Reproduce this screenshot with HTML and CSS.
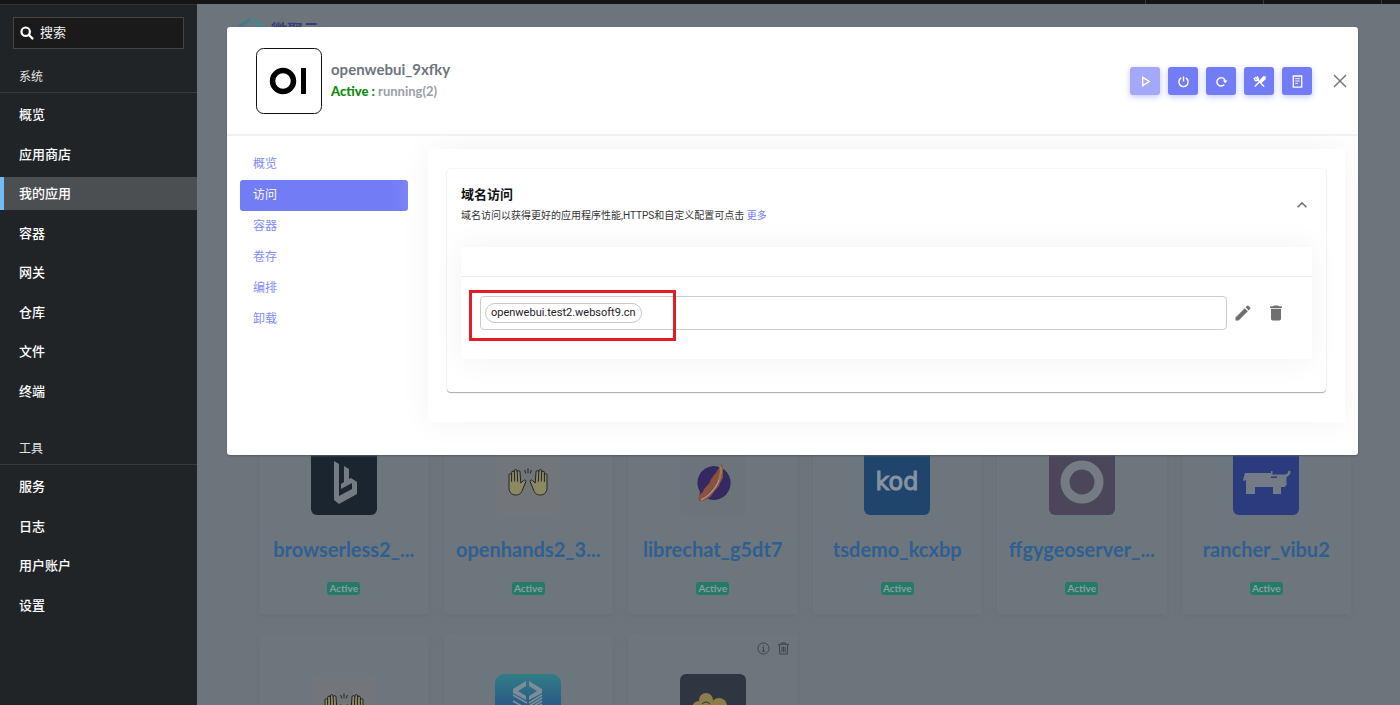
FILE: index.html
```html
<!DOCTYPE html>
<html lang="zh-CN">
<head>
<meta charset="utf-8">
<meta name="viewport" content="width=device-width, initial-scale=1">
<title>我的应用</title>
<link rel="stylesheet" href="styles.css">
</head>
<body>
<svg class="defs" aria-hidden="true">
  <symbol id="hands" viewBox="0 0 40 28">
    <g id="hand" fill="#8c8961" stroke="#20242c" stroke-width="1" stroke-linejoin="round" stroke-linecap="round">
      <path d="M1 15V7a1.3 1.3 0 0 1 2.6 0V4.500a1.400 1.400 0 0 1 2.800 0V3a1.400 1.400 0 0 1 2.800 0V4a1.400 1.400 0 0 1 2.800 0l.8 11 3-2.700c1.200-.9 2.600.1 2 1.500l-3.500 8.500C13 26 10.500 27 7.500 27 3.500 27 1 24 1 20z"/>
      <path d="M3.600 7v6.500M6.400 4.500l.3 8.500M9.200 4l.5 9.500" fill="none"/>
    </g>
    <use href="#hand" transform="matrix(-1 0 0 1 40 0)"/>
    <path d="M16.500 2l1.500 3.500M20 .5v4.500M23.500 2L22 5.500" stroke="#20242c" fill="none"/>
  </symbol>
</svg>
<div class="page">
  <div class="topbar"><span></span><span></span><span></span></div>
  <div class="shell">
    <aside class="sidebar">
      <label class="search">
        <svg viewBox="0 0 16 16" width="14" height="14" aria-hidden="true"><circle cx="6.500" cy="6.500" r="4.800"/><path d="M10.200 10.200L15 15"/></svg>
        <input type="text" placeholder="搜索" aria-label="搜索">
      </label>
      <h2 class="side-title">系统</h2>
      <nav class="side-list side-list-system">
        <a href="#">概览</a><a href="#">应用商店</a><a href="#" class="current">我的应用</a><a href="#">容器</a><a href="#">网关</a><a href="#">仓库</a><a href="#">文件</a><a href="#">终端</a>
      </nav>
      <h2 class="side-title side-title-tools">工具</h2>
      <nav class="side-list side-list-tools">
        <a href="#">服务</a><a href="#">日志</a><a href="#">用户账户</a><a href="#">设置</a>
      </nav>
    </aside>
    <main class="main">
      <header class="brand">
        <svg viewBox="0 0 28 28" width="28" height="28" aria-hidden="true"><path d="M1 11L13 2.500V6L5 12v6l-4 2z" fill="#397f87"/><path d="M15 2.500L27 11v9l-4-2v-6l-8-6z" fill="#3b8b8d"/><path d="M2 22l12 6 12-6-4-2-8 4-8-4z" fill="#35608b"/></svg>
        <span>微聚云</span>
      </header>
      <section class="apps">
        <article class="app">
          <svg class="app-logo" viewBox="0 0 66 66"><rect width="66" height="66" rx="6" fill="#1b2530"/><path d="M23 12l5 3v32l13-7v-6l-11 6v-5l3-2V17l5 3v10l2-1 6 4v12L28 55l-5-4z" fill="#747c83"/></svg>
          <h3>browserless2_...</h3><span class="badge">Active</span>
        </article>
        <article class="app">
          <svg class="app-logo" viewBox="0 0 66 66"><rect width="66" height="66" rx="6" fill="#727579"/><use href="#hands" x="13" y="19" width="40" height="28"/></svg>
          <h3>openhands2_3...</h3><span class="badge">Active</span>
        </article>
        <article class="app">
          <svg class="app-logo" viewBox="0 0 66 66"><rect width="66" height="66" rx="6" fill="#6c747b"/><path d="M33 17a17 17 0 1 1-9 31l-5 3 1-8A17 17 0 0 1 33 17z" fill="#342961"/><path d="M41 14c3 5 2 9 2 14-1 4-3 5-4 9-3 4-5 5-7 9-4 4-8 7-13 6-2-3 1-7 4-9 1-5 5-6 7-10 2-6 5-7 7-11 2-3 4-4 4-8z" fill="#8b513f"/><path d="M41 18c1 14-8 27-20 33" fill="none" stroke="#aaa49c" stroke-width="1.200"/><path d="M40 17c2 5 1 9-1 14" stroke="#967d4f" stroke-width="2" fill="none"/></svg>
          <h3>librechat_g5dt7</h3><span class="badge">Active</span>
        </article>
        <article class="app">
          <svg class="app-logo" viewBox="0 0 66 66"><rect width="66" height="66" rx="6" fill="#20456d"/><text x="33" y="41" class="kod">kod</text></svg>
          <h3>tsdemo_kcxbp</h3><span class="badge">Active</span>
        </article>
        <article class="app">
          <svg class="app-logo" viewBox="0 0 66 66"><rect width="66" height="66" rx="6" fill="#4b465a"/><circle cx="33" cy="33" r="17" fill="none" stroke="#747b84" stroke-width="9"/></svg>
          <h3>ffgygeoserver_...</h3><span class="badge">Active</span>
        </article>
        <article class="app">
          <svg class="app-logo" viewBox="0 0 66 66"><rect width="66" height="66" rx="6" fill="#2a3c7e"/><path d="M12 24h26v5h7v9h3v7h-8v-7H22v7h-9V31l-2 1-1-1zM38 22h1.500v3.500H51c3 0 4-1 4.500-4l2 .5c0 3-1 5-4 6v8l-2 2h-6l-1.500-2V27.500h-6z" fill="#737b87"/></svg>
          <h3>rancher_vibu2</h3><span class="badge">Active</span>
        </article>
        <article class="app">
          <svg class="app-logo" viewBox="0 0 66 66"><rect width="66" height="66" rx="6" fill="#727579"/><use href="#hands" x="13" y="19" width="40" height="28"/></svg>
        </article>
        <article class="app">
          <svg class="app-logo" viewBox="0 0 66 66"><defs><linearGradient id="blue" x2="0" y2="1"><stop stop-color="#317d87"/><stop offset=".5" stop-color="#2a5885"/><stop offset="1" stop-color="#28437c"/></linearGradient></defs><rect width="66" height="66" rx="9" fill="url(#blue)"/><path d="M31 7L18 15v4l13 7v-4l-8-5 8-5zM34 7l13 8v4l-13 7v-4l8-5-8-5z" fill="#7d8d98"/><path d="M18 21l14 8M18 27l14 8M34 29l13-8M34 32l13-8M34 35l13-8M34 38l13-8" stroke="#7d8d98" stroke-width="1.600"/></svg>
        </article>
        <article class="app app-hover">
          <div class="app-tools">
            <button type="button" aria-label="详情"><svg viewBox="0 0 14 14" width="13" height="13"><circle cx="7" cy="7" r="6"/><path d="M5.500 6H7v4M5.500 10h3M7 3.500v1"/></svg></button>
            <button type="button" aria-label="删除"><svg viewBox="0 0 14 14" width="13" height="13"><path d="M1 2.500h12M5 2.500V1h4v1.500M2.500 3l.5 10h8l.5-10M5.300 5v6M7 5v6M8.700 5v6"/></svg></button>
          </div>
          <svg class="app-logo" viewBox="0 0 66 66"><rect width="66" height="66" rx="6" fill="#2f3642"/><g fill="#8c7d4a"><circle cx="26" cy="26" r="7"/><circle cx="39" cy="32" r="8"/><circle cx="19" cy="34" r="7"/></g><path d="M22 30q4-4 8 0" fill="none" stroke="#2f3642"/></svg>
        </article>
      </section>
    </main>
    <div class="overlay">
      <section class="dialog" role="dialog" aria-label="openwebui_9xfky">
        <header class="dialog-head">
          <svg class="dialog-logo" viewBox="0 0 66 66" role="img" aria-label="OI"><rect x=".5" y=".5" width="65" height="65" rx="7" fill="#fff" stroke="#111"/><circle cx="27" cy="33" r="10.500" fill="none" stroke="#000" stroke-width="5.500"/><rect x="45" y="20" width="5" height="26"/></svg>
          <div class="dialog-name"><h1>openwebui_9xfky</h1><p><strong>Active :</strong> running(2)</p></div>
          <div class="actions">
            <button type="button" disabled aria-label="启动"><svg viewBox="0 0 14 14"><path d="M4 2.500v9L11 7z"/></svg></button>
            <button type="button" aria-label="停止"><svg viewBox="0 0 14 14"><path d="M4.500 3.200a5 5 0 1 0 5 0M7 1.500V7"/></svg></button>
            <button type="button" aria-label="重启"><svg viewBox="0 0 14 14"><path d="M10 10.300A4.500 4.500 0 1 1 11 6.500"/><path d="M8.500 6h5L11 9z" fill="#fff" stroke="none"/></svg></button>
            <button type="button" aria-label="重建"><svg viewBox="0 0 14 14"><path d="M4 4l8 8.500M2 12.500l5.500-5.700"/><path d="M7.500 6.500l4-4.500 1.500.2V4L9 7.800z" fill="#fff"/><path d="M1 3l1.500 3L5 6l1-1.500L4.500 1.500M2.500 2L4 4" /></svg></button>
            <button type="button" aria-label="日志"><svg viewBox="0 0 14 14"><path d="M2.500 1h9v12h-9z"/><path d="M4.500 4h5M4.500 6.500h5M4.500 9h3" stroke-width="1"/></svg></button>
          </div>
          <button type="button" class="close" aria-label="关闭"><svg viewBox="0 0 16 16" width="16" height="16"><path d="M2 2l12 12M14 2L2 14"/></svg></button>
        </header>
        <div class="dialog-body">
          <nav class="tabs"><a href="#">概览</a><a href="#" class="selected">访问</a><a href="#">容器</a><a href="#">卷存</a><a href="#">编排</a><a href="#">卸载</a></nav>
          <div class="panel">
            <section class="accordion">
              <header class="accordion-head">
                <div><h2>域名访问</h2><p>域名访问以获得更好的应用程序性能,HTTPS和自定义配置可点击 <a href="#">更多</a></p></div>
                <button type="button" class="plain" aria-label="收起"><svg viewBox="0 0 24 24" width="20" height="20"><path d="M12 8l-6 6 1.410 1.410L12 10.830l4.590 4.580L18 14z"/></svg></button>
              </header>
              <div class="domains">
                <div class="domain-row">
                  <div class="field"><span class="chip">openwebui.test2.websoft9.cn</span><input type="text" aria-label="域名"><span class="highlight"></span></div>
                  <button type="button" class="plain" aria-label="编辑"><svg viewBox="0 0 24 24" width="20" height="20"><path d="M3 17.250V21h3.750L17.810 9.940l-3.750-3.750L3 17.250zM20.710 7.040a1 1 0 0 0 0-1.410l-2.340-2.340a1 1 0 0 0-1.410 0l-1.830 1.830 3.750 3.750z"/></svg></button>
                  <button type="button" class="plain" aria-label="删除"><svg viewBox="0 0 24 24" width="20" height="20"><path d="M6 19c0 1.100.9 2 2 2h8c1.100 0 2-.9 2-2V7H6zM19 4h-3.500l-1-1h-5l-1 1H5v2h14z"/></svg></button>
                </div>
              </div>
            </section>
          </div>
        </div>
      </section>
    </div>
  </div>
</div>
</body>
</html>
```
FILE: styles.css
```css
* { box-sizing: border-box; }
body {
  margin: 0;
  font-family: Roboto, "Noto Sans CJK SC", sans-serif;
  background: #6d757c;
}
h1, h2, h3, p { margin: 0; }
a { text-decoration: none; }
button { border: 0; padding: 0; background: none; font: inherit; }
input { border: 0; outline: 0; background: none; font: inherit; min-width: 0; }
svg { display: block; flex: none; }
.defs { position: absolute; width: 0; height: 0; }

.page { height: 100vh; overflow: hidden; display: flex; flex-direction: column; }
.topbar {
  height: 4px;
  flex: none;
  display: flex;
  justify-content: flex-end;
  gap: 117px;
  padding-right: 18px;
  background: #151515;
}
.topbar span { width: 1px; background: #3a3a3a; }
.shell { flex: 1; min-height: 0; display: flex; position: relative; }

/* Sidebar */
.sidebar { width: 197px; flex: none; background: #212427; border-top: 1px solid #303336; color: #fff; }
.search {
  display: flex;
  align-items: center;
  gap: 6px;
  height: 32px;
  margin: 12px 13px 0;
  padding: 0 6px;
  background: #1a1a1a;
  border: 1px solid #444;
}
.search svg { fill: none; stroke: #fff; stroke-width: 2.5; }
.search input { flex: 1; width: 100%; padding: 0 0 2px; color: #fff; font-size: 13px; }
.search input::placeholder { color: #f0f0f0; opacity: 1; }
.side-title {
  height: 44px;
  padding: 17px 19px 0;
  border-bottom: 1px solid #383b3e;
  color: #e4e4e4;
  font-size: 12px;
  font-weight: 400;
  line-height: 22px;
}
.side-title-tools { margin-top: 10px; }
.side-list { display: grid; grid-auto-rows: 1fr; align-items: center; padding-top: 2px; font-size: 13px; font-weight: 500; }
.side-list-system { min-height: 318px; }
.side-list-tools { min-height: 160px; }
.side-list a { padding: 0 19px; color: #fff; line-height: 33px; }
.side-list .current { background: #4b4f52; border-left: 4px solid #73bcf7; padding-left: 15px; }

/* Application list behind the dialog */
.main { flex: 1; min-width: 0; overflow: hidden; padding: 12px 49px 0 62px; background: #6d757c; }
.brand {
  display: flex;
  align-items: center;
  gap: 6px;
  height: 26px;
  margin-left: -22px;
  color: #363f79;
  font-size: 16px;
  font-weight: 700;
}
.apps { display: grid; grid-template-columns: repeat(6, 1fr); gap: 20px 15px; margin-top: 367px; }
.app {
  position: relative;
  height: 205px;
  padding-top: 40px;
  display: flex;
  flex-direction: column;
  align-items: center;
  background: #6e767d;
  border-radius: 3px;
  box-shadow: 0 2px 6px #676f79;
  font-family: Lato, "Open Sans", sans-serif;
}
.app-logo { width: 66px; height: 66px; }
.app h3 { margin-top: 21px; color: #2f5f90; font-size: 20px; line-height: 26px; font-weight: 700; white-space: nowrap; }
.badge {
  margin-top: 20px;
  padding: 0 2px;
  border-radius: 3px;
  background: #257b68;
  color: #8b9ea0;
  font-size: 10px;
  line-height: 13px;
  font-weight: 700;
}
.kod { fill: #8793a0; stroke: #8793a0; stroke-width: 1; font: 24px "DejaVu Sans", sans-serif; text-anchor: middle; }
.app-tools { position: absolute; top: 8px; right: 8px; display: flex; gap: 7px; }
.app-tools svg { fill: none; stroke: #394149; stroke-width: 1; }

/* Dialog */
.overlay { position: absolute; top: 0; right: 0; bottom: 0; left: 197px; padding: 23px 42px 0 30px; }
.dialog { background: #fff; border-radius: 3px; box-shadow: 0 1px 2px #555d64; overflow: hidden; }
.dialog-head {
  display: flex;
  align-items: center;
  padding: 21px 10px 20px 29px;
  border-bottom: 2px solid #f1f1f2;
}
.dialog-logo { width: 66px; height: 66px; }
.dialog-name { flex: 1; padding: 0 0 4px 9px; font-family: Lato, "Open Sans", sans-serif; }
.dialog-name h1 { color: #6c757d; font-size: 15px; line-height: 24px; }
.dialog-name p { color: #98a0a6; font-size: 13px; line-height: 20px; font-weight: 700; }
.dialog-name strong { color: #0a8a0a; }
.actions { display: flex; gap: 8px; margin-right: 20px; }
.actions button {
  width: 30px;
  height: 28px;
  display: grid;
  place-items: center;
  border-radius: 3px;
  background: #727cf5;
  box-shadow: 0 2px 6px #c4c8fb;
}
.actions button:disabled { background: #a3a9f8; }
.actions svg { width: 13px; height: 13px; fill: none; stroke: #fff; stroke-width: 1.5; }
.close svg { fill: none; stroke: #777; stroke-width: 1.5; }
.dialog-body { display: flex; gap: 20px; padding: 13px 13px 33px; }
.tabs { width: 168px; flex: none; font-size: 12px; line-height: 31px; }
.tabs a { display: block; padding: 0 13px; border-radius: 3px; color: #828bf5; }
.tabs .selected { background: #727cf5; color: #fff; }
.panel { flex: 1; min-width: 0; padding: 20px 19px 30px; box-shadow: 0 0 30px #f3f3f4; }
.accordion {
  padding: 15px 14px 33px;
  border-radius: 4px;
  box-shadow: 0 1px 1px #aaa, 0 0 2px #e4e4e4;
}
.accordion-head { display: flex; align-items: center; justify-content: space-between; }
.accordion-head h2 { color: #111; font-size: 13px; line-height: 22px; }
.accordion-head p { color: #333; font-size: 10px; line-height: 20px; }
.accordion-head a { color: #727cf5; }
.plain { color: #707070; }
.plain svg { fill: currentColor; }
.domains { margin-top: 21px; padding-top: 29px; box-shadow: 0 0 30px #f1f1f2; }
.domain-row { display: flex; align-items: center; gap: 13px; padding: 19px 26px 29px 19px; border-top: 1px solid #e9eaec; }
.domain-row .plain { width: 20px; }
.field {
  position: relative;
  flex: 1;
  display: flex;
  align-items: center;
  height: 34px;
  padding: 0 4px;
  margin-right: -7px;
  border: 1px solid #c9cbcd;
  border-radius: 4px;
}
.field input { flex: 1; }
.chip { padding: 0 5px; border: 1px solid #c8c8c8; border-radius: 10px; color: #222; font-size: 11px; line-height: 18px; }
.highlight { position: absolute; top: -7px; left: -12px; width: 207px; height: 51px; border: 3px solid #e51b23; }
```
